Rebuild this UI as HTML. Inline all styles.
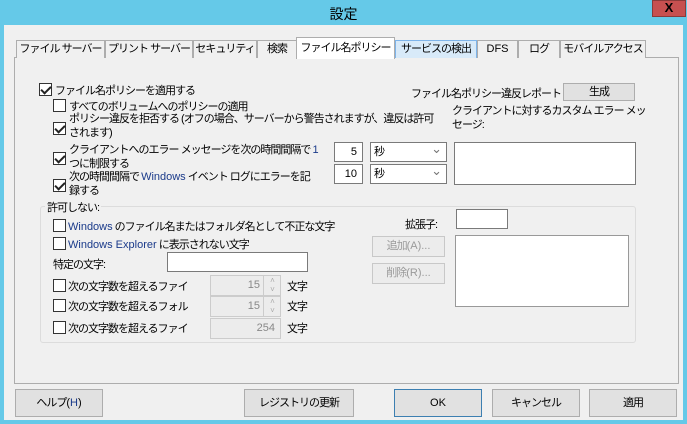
<!DOCTYPE html>
<html><head><meta charset="utf-8"><style>
*{box-sizing:border-box;margin:0;padding:0}
body{width:687px;height:424px;background:#65c9e8;position:relative;overflow:hidden;font-family:"Liberation Sans","Noto Sans CJK JP",sans-serif;font-size:11px;letter-spacing:-1px;color:#000}
.a{position:absolute;white-space:nowrap}
.l{letter-spacing:0}
.win{position:absolute;left:4px;top:25px;width:679px;height:395px;background:#f0f0f0}
.tab{position:absolute;top:40px;height:18px;border:1px solid #adadad;border-bottom:none;background:#f0f0f0;text-align:center;line-height:16px;white-space:nowrap;overflow:hidden}
.cb{position:absolute;width:13px;height:13px;border:1px solid #333;background:#fff}
.cb.on::after{content:"";position:absolute;left:3px;top:0px;width:4px;height:8px;border:solid #222;border-width:0 2px 2px 0;transform:rotate(45deg)}
.box{position:absolute;background:#fff;border:1px solid #7a7a7a;letter-spacing:0}
.btn{position:absolute;background:#e1e1e1;border:1px solid #adadad;text-align:center;white-space:nowrap}
.dis{color:#9a9a9a;border-color:#c8c8c8;background:#ececec}
.sel::after{content:"⌄";position:absolute;right:4px;top:-3px;color:#777;font-size:13px}
</style></head><body>
<div class="a" style="left:0;top:4px;width:687px;text-align:center;font-size:14px;letter-spacing:0">設定</div>
<div class="a" style="left:652px;top:0;width:34px;height:17px;background:#c75050;border:1px solid #8a3a3a;color:#000;font-weight:bold;text-align:center;line-height:14px;font-size:13px;letter-spacing:0">X</div>
<div class="win"></div>
<div class="a" style="left:14px;top:57px;width:665px;height:327px;border:1px solid #adadad;background:#f0f0f0"></div>
<div class="tab" style="left:16px;width:89px">ファイル サーバー</div>
<div class="tab" style="left:105px;width:88px">プリント サーバー</div>
<div class="tab" style="left:193px;width:64px">セキュリティ</div>
<div class="tab" style="left:257px;width:40px">検索</div>
<div class="tab" style="left:296px;top:37px;height:22px;width:99px;background:#fff;line-height:20px;z-index:2">ファイル名ポリシー</div>
<div class="tab" style="left:395px;width:82px;background:#d8eaf9;border-color:#7eb4ea">サービスの検出</div>
<div class="tab l" style="left:477px;width:41px">DFS</div>
<div class="tab" style="left:518px;width:42px">ログ</div>
<div class="tab" style="left:560px;width:86px">モバイルアクセス</div>

<div class="cb on" style="left:39px;top:83px"></div><div class="a" style="left:55px;top:82px">ファイル名ポリシーを適用する</div>
<div class="a" style="left:411px;top:85px">ファイル名ポリシー違反レポート</div>
<div class="btn" style="left:563px;top:83px;width:72px;height:18px;line-height:16px">生成</div>
<div class="cb" style="left:53px;top:99px"></div><div class="a" style="left:69px;top:98px">すべてのボリュームへのポリシーの適用</div>
<div class="cb on" style="left:53px;top:122px"></div><div class="a" style="left:69px;top:112px;line-height:14px">ポリシー違反を拒否する (オフの場合、サーバーから警告されますが、違反は許可<br>されます)</div>
<div class="a" style="left:452px;top:104px;line-height:14px">クライアントに対するカスタム エラー メッ<br>セージ:</div>
<div class="cb on" style="left:53px;top:152px"></div><div class="a" style="left:69px;top:143px;line-height:14px">クライアントへのエラー メッセージを次の時間間隔で <span class="l" style="color:#1a3a8a">1</span><br>つに制限する</div>
<div class="cb on" style="left:53px;top:179px"></div><div class="a" style="left:69px;top:170px;line-height:14px">次の時間間隔で <span class="l" style="color:#1a3a8a">Windows</span> イベント ログにエラーを記<br>録する</div>
<div class="box" style="left:334px;top:142px;width:29px;height:20px;text-align:right;padding-right:5px;line-height:18px">5</div>
<div class="box sel" style="left:370px;top:142px;width:77px;height:20px;padding-left:3px;line-height:18px">秒</div>
<div class="box" style="left:334px;top:164px;width:29px;height:20px;text-align:right;padding-right:5px;line-height:18px">10</div>
<div class="box sel" style="left:370px;top:164px;width:77px;height:20px;padding-left:3px;line-height:18px">秒</div>
<div class="box" style="left:454px;top:142px;width:182px;height:43px"></div>

<div class="a" style="left:40px;top:206px;width:596px;height:137px;border:1px solid #dcdcdc;border-radius:3px"></div>
<div class="a" style="left:45px;top:199px;background:#f0f0f0;padding:0 2px">許可しない:</div>
<div class="cb" style="left:53px;top:219px"></div><div class="a" style="left:68px;top:218px"><span class="l" style="color:#1a3a8a">Windows</span> のファイル名またはフォルダ名として不正な文字</div>
<div class="cb" style="left:53px;top:237px"></div><div class="a" style="left:68px;top:236px"><span class="l" style="color:#1a3a8a">Windows Explorer</span> に表示されない文字</div>
<div class="a" style="left:53px;top:256px">特定の文字:</div>
<div class="box" style="left:167px;top:252px;width:141px;height:20px"></div>
<div class="cb" style="left:53px;top:279px"></div><div class="a" style="left:68px;top:278px">次の文字数を超えるファイ</div>
<div class="box dis" style="left:210px;top:275px;width:71px;height:21px;color:#888;padding-right:20px;text-align:right;line-height:19px;border-color:#ccc">15</div>
<div class="a" style="left:263px;top:276px;width:17px;height:19px;border-left:1px solid #ccc;color:#aaa;font-size:8px;line-height:9px;text-align:center">˄<br>˅</div>
<div class="a" style="left:287px;top:278px">文字</div>
<div class="cb" style="left:53px;top:299px"></div><div class="a" style="left:68px;top:298px">次の文字数を超えるフォル</div>
<div class="box dis" style="left:210px;top:296px;width:71px;height:21px;color:#888;padding-right:20px;text-align:right;line-height:19px;border-color:#ccc">15</div>
<div class="a" style="left:263px;top:297px;width:17px;height:19px;border-left:1px solid #ccc;color:#aaa;font-size:8px;line-height:9px;text-align:center">˄<br>˅</div>
<div class="a" style="left:287px;top:298px">文字</div>
<div class="cb" style="left:53px;top:321px"></div><div class="a" style="left:68px;top:320px">次の文字数を超えるファイ</div>
<div class="box dis" style="left:210px;top:318px;width:71px;height:21px;color:#888;padding-right:5px;text-align:right;line-height:19px;border-color:#ccc">254</div>
<div class="a" style="left:287px;top:320px">文字</div>
<div class="a" style="left:405px;top:216px">拡張子:</div>
<div class="box" style="left:456px;top:209px;width:52px;height:20px"></div>
<div class="btn dis" style="left:372px;top:236px;width:73px;height:21px;line-height:19px">追加<span class="l">(A)...</span></div>
<div class="btn dis" style="left:372px;top:263px;width:73px;height:21px;line-height:19px">削除<span class="l">(R)...</span></div>
<div class="box" style="left:455px;top:235px;width:174px;height:72px;border-color:#999"></div>

<div class="btn" style="left:15px;top:389px;width:88px;height:28px;line-height:26px">ヘルプ<span class="l">(<span style="color:#1a3a8a">H</span>)</span></div>
<div class="btn" style="left:244px;top:389px;width:110px;height:28px;line-height:26px">レジストリの更新</div>
<div class="btn l" style="left:394px;top:389px;width:88px;height:28px;line-height:26px;border-color:#3c7fb1">OK</div>
<div class="btn" style="left:492px;top:389px;width:88px;height:28px;line-height:26px">キャンセル</div>
<div class="btn" style="left:589px;top:389px;width:88px;height:28px;line-height:26px">適用</div>
</body></html>
